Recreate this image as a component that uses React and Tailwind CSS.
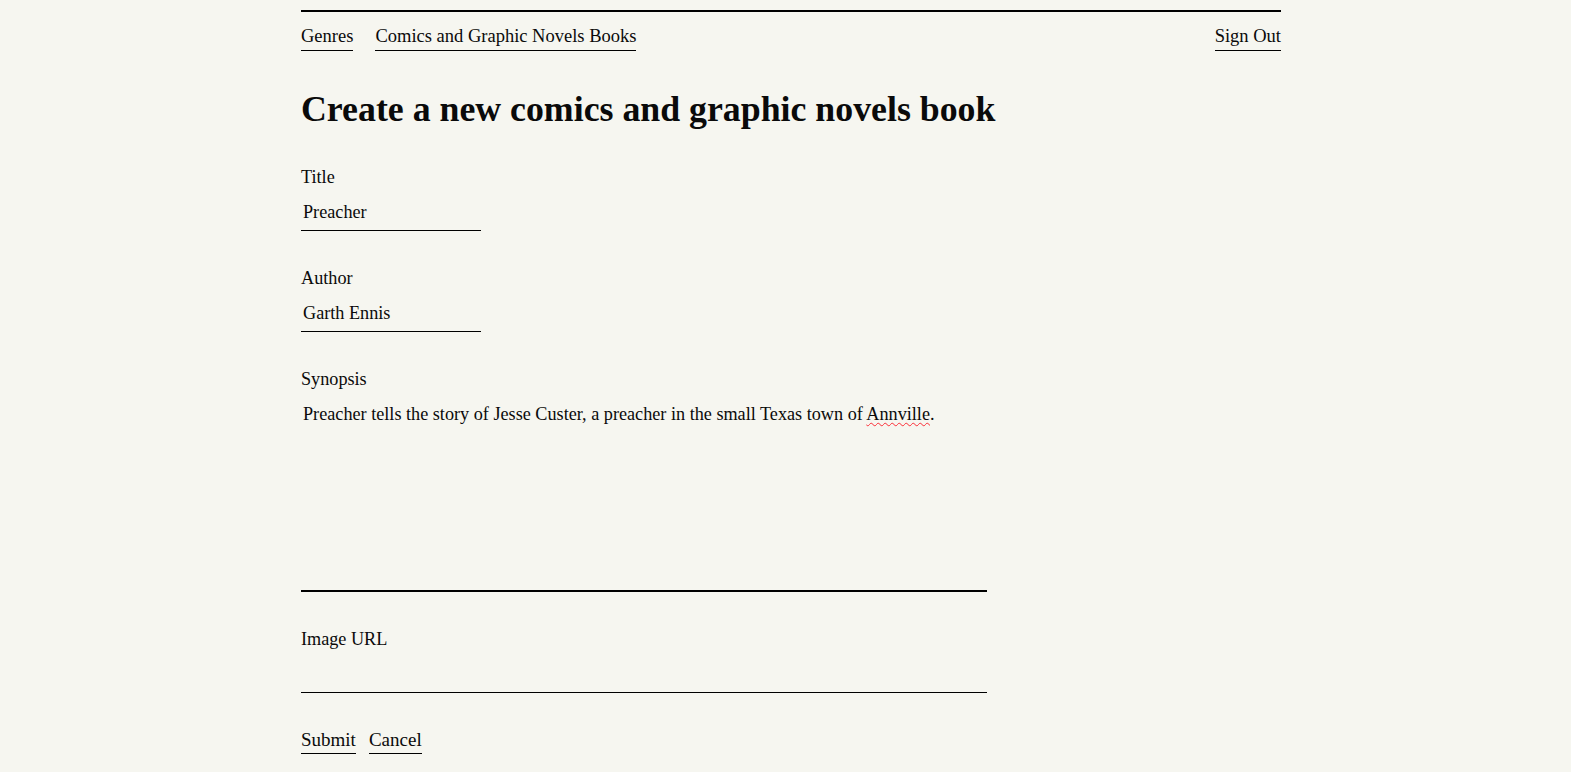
export default function App() {
  const font = { fontFamily: '"Liberation Serif", "Times New Roman", serif' };
  return (
    <div className="min-h-screen bg-[#f6f6f0] text-[#0a0a0a]" style={font}>
      <div className="ml-[301px] w-[980px] pt-[10px]">
        <nav className="border-t-2 border-black pt-[12px] flex items-start justify-between text-[18.5px] leading-[24px]">
          <div className="flex gap-[22px]">
            <a className="border-b border-black pb-[2px]">Genres</a>
            <a className="border-b border-black pb-[2px]">Comics and Graphic Novels Books</a>
          </div>
          <a className="border-b border-black pb-[2px]">Sign Out</a>
        </nav>
        <h1 className="mt-[38px] text-[35.8px] leading-[40px] font-bold">Create a new comics and graphic novels book</h1>
        <form className="mt-[36px] flex flex-col text-[18.2px] leading-[24px]">
          <label className="block">Title</label>
          <div className="mt-[11px] w-[180px] border-b border-black pb-[6px] pl-[2px]">Preacher</div>
          <label className="block mt-[35px]">Author</label>
          <div className="mt-[11px] w-[180px] border-b border-black pb-[6px] pl-[2px]">Garth Ennis</div>
          <label className="block mt-[35px]">Synopsis</label>
          <div className="mt-[11px] w-[686px] h-[190px] border-b-2 border-black pl-[2px]">
            Preacher tells the story of Jesse Custer, a preacher in the small Texas town of{" "}
            <span className="underline decoration-wavy decoration-red-500 decoration-1 underline-offset-2">Annville</span>.
          </div>
          <label className="block mt-[35px]">Image URL</label>
          <div className="mt-[11px] w-[686px] h-[31px] border-b border-black"></div>
          <div className="mt-[35px] flex gap-[13px] text-[19px]">
            <button type="button" className="border-b border-black pb-[1px]">Submit</button>
            <button type="button" className="border-b border-black pb-[1px]">Cancel</button>
          </div>
        </form>
      </div>
    </div>
  );
}
